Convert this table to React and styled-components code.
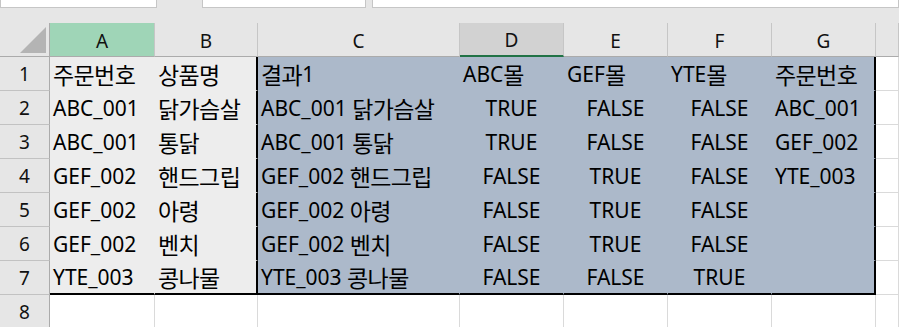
import React from "react"
import styled, { createGlobalStyle } from "styled-components"

const GlobalStyle = createGlobalStyle`
  body {
    margin: 0;
    background: #ffffff;
    overflow: hidden;
  }
`

const columns = ["A", "B", "C", "D", "E", "F", "G"]

const rows = [
  ["주문번호", "상품명", "결과1", "ABC몰", "GEF몰", "YTE몰", "주문번호"],
  ["ABC_001", "닭가슴살", "ABC_001 닭가슴살", "TRUE", "FALSE", "FALSE", "ABC_001"],
  ["ABC_001", "통닭", "ABC_001 통닭", "TRUE", "FALSE", "FALSE", "GEF_002"],
  ["GEF_002", "핸드그립", "GEF_002 핸드그립", "FALSE", "TRUE", "FALSE", "YTE_003"],
  ["GEF_002", "아령", "GEF_002 아령", "FALSE", "TRUE", "FALSE", ""],
  ["GEF_002", "벤치", "GEF_002 벤치", "FALSE", "TRUE", "FALSE", ""],
  ["YTE_003", "콩나물", "YTE_003 콩나물", "FALSE", "FALSE", "TRUE", ""],
]

// hangul runs get their own span so they can be sized like Malgun Gothic
const CellText = ({ value }) =>
  value.split(/([가-힣]+)/).map((part, i) =>
    /[가-힣]/.test(part) ? <Hangul key={i}>{part}</Hangul> : part
  )

const App = () => {
  return (
    <Wrapper>
      <GlobalStyle />
      <FormulaStrip>
        <InputBox $width="157px" />
        <InputBox $width="164px" $gap="45px" />
        <InputBox $gap="6px" $grow />
      </FormulaStrip>
      <Sheet>
        <Corner>
          <Triangle />
        </Corner>
        {columns.map((c) => (
          <ColHead key={c} $selected={c === "A"} $active={c === "D"}>
            {c}
          </ColHead>
        ))}
        <ColHead />

        {rows.map((row, r) => {
          const last = r === rows.length - 1
          return (
            <React.Fragment key={r}>
              <RowHead>{r + 1}</RowHead>
              {row.map((value, c) => {
                const isBool = value === "TRUE" || value === "FALSE"
                return (
                  <Cell
                    key={c}
                    $fill={c < 2 ? "#ededed" : "#acb9ca"}
                    $center={isBool}
                    $thickRight={c === 1 || c === 6}
                    $thickBottom={last}
                  >
                    <CellText value={value} />
                  </Cell>
                )
              })}
              <Cell />
            </React.Fragment>
          )
        })}

        <RowHead>8</RowHead>
        {columns.map((c) => (
          <Cell key={c} />
        ))}
        <Cell />
      </Sheet>
    </Wrapper>
  )
}

const Wrapper = styled.div`
  width: 899px;
  height: 327px;
  overflow: hidden;
  background: #e6e6e6;
  font-family: "Noto Sans", "Noto Sans CJK KR", sans-serif;
`

const FormulaStrip = styled.div`
  display: flex;
  height: 23px;
  align-items: flex-start;
`

const InputBox = styled.div`
  box-sizing: border-box;
  width: ${(p) => p.$width || "auto"};
  flex: ${(p) => (p.$grow ? 1 : "none")};
  margin-left: ${(p) => p.$gap || "0"};
  height: 8px;
  background: #ffffff;
  border: 1px solid #c6c6c6;
  border-top: none;
`

const Sheet = styled.div`
  display: grid;
  grid-template-columns: 50px 105px 103px 202px 104px 104px 104px 104px 1fr;
  grid-auto-rows: 34px;
  background: #ffffff;
`

const HeadBase = styled.div`
  box-sizing: border-box;
  display: flex;
  align-items: center;
  justify-content: center;
  background: #e6e6e6;
  color: #111111;
  font-size: 19px;
`

const Corner = styled(HeadBase)`
  position: relative;
  border-right: 1px solid #ababab;
  border-bottom: 1px solid #ababab;
`

const Triangle = styled.div`
  position: absolute;
  right: 3px;
  bottom: 3px;
  width: 0;
  height: 0;
  border-left: 26px solid transparent;
  border-bottom: 26px solid #b4b4b4;
`

const ColHead = styled(HeadBase)`
  padding-top: 2px;
  background: ${(p) => (p.$selected ? "#9fd5b7" : p.$active ? "#d2d2d2" : "#e6e6e6")};
  border-right: 1px solid #c6c6c6;
  border-bottom: ${(p) => (p.$active ? "2px solid #217346" : "1px solid #ababab")};
`

const RowHead = styled(HeadBase)`
  border-right: 1px solid #ababab;
  border-bottom: 1px solid #c2c2c2;
`

const Cell = styled.div`
  box-sizing: border-box;
  display: flex;
  align-items: center;
  justify-content: ${(p) => (p.$center ? "center" : "flex-start")};
  padding: 0 3px;
  white-space: pre;
  overflow: hidden;
  font-size: 21px;
  color: #000000;
  background: ${(p) => p.$fill || "#ffffff"};
  border-right: ${(p) => (p.$thickRight ? "2px solid #000000" : `1px solid ${p.$fill || "#dadada"}`)};
  border-bottom: ${(p) => (p.$thickBottom ? "2px solid #000000" : `1px solid ${p.$fill || "#dadada"}`)};
`

const Hangul = styled.span`
  font-family: "Noto Sans CJK KR", sans-serif;
  font-size: 23px;
  letter-spacing: -0.6px;
`

export default App
